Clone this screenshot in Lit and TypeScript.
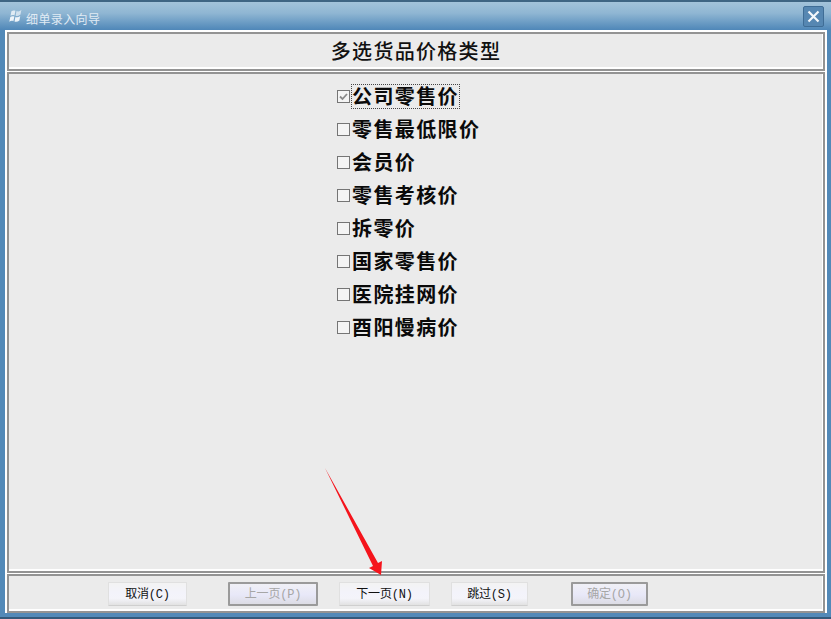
import { LitElement, css, html } from 'lit';
import { customElement } from 'lit/decorators.js';

const PRICE_TYPES = ['公司零售价', '零售最低限价', '会员价', '零售考核价', '拆零价', '国家零售价', '医院挂网价', '酉阳慢病价'];

@customElement('app-root')
export class AppRoot extends LitElement {
  static override styles = css`
    :host {
      display: block;
      position: relative;
      width: 831px;
      height: 619px;
      overflow: hidden;
      font-family: "Liberation Serif", "Noto Sans CJK SC", serif;
    }
    .window {
      display: flex;
      flex-direction: column;
      height: 100%;
      box-sizing: border-box;
      padding-bottom: 2px;
      background: #5289b8;
      border-bottom: 2px solid #34597a;
    }
    .titlebar {
      display: flex;
      align-items: center;
      flex: none;
      height: 30px;
      box-sizing: border-box;
      padding: 1px 7px 0 8px;
      background: linear-gradient(#a3c3da, #8fb6d3 40%, #4f87b8);
      border-top: 2px solid #3f6583;
    }
    .flag { flex: none; margin-right: 3px; }
    .caption {
      flex: 1;
      padding-top: 4px;
      color: #e0ebf4;
      font: 12px "Noto Sans CJK SC", sans-serif;
      letter-spacing: 0.4px;
    }
    .close {
      display: flex;
      align-items: center;
      justify-content: center;
      width: 21px;
      height: 21px;
      box-sizing: border-box;
      background: #5687b2;
      border: 1px solid #3f6d96;
      border-radius: 2px;
    }
    .client {
      display: flex;
      flex-direction: column;
      gap: 1px;
      flex: 1;
      min-height: 0;
      margin: 0 4px 2px 5px;
      padding: 2px 2px 0;
      background: #fff;
    }
    .panel {
      box-sizing: border-box;
      background: #ebebeb;
      border: 2px solid #939393;
      box-shadow: inset -1px -2px 0 #fff;
    }
    .heading {
      flex: none;
      height: 39px;
      padding-bottom: 3px;
      display: flex;
      align-items: center;
      justify-content: center;
      font: 500 20px "Noto Sans CJK SC", sans-serif;
      letter-spacing: 1.3px;
      color: #111;
    }
    .main {
      flex: 1;
      min-height: 0;
      padding-top: 6px;
    }
    .list {
      width: 158px;
      margin: 0 auto;
    }
    .row {
      display: flex;
      align-items: center;
      height: 33px;
      font: 700 20px "Noto Sans CJK SC", sans-serif;
      letter-spacing: 1.4px;
      color: #0a0a0a;
    }
    .box {
      flex: none;
      display: flex;
      width: 13px;
      height: 13px;
      box-sizing: border-box;
      margin-right: 1px;
      background: #f4f4f4;
      border: 1px solid #757575;
    }
    .label {
      padding: 0 0 1px;
      border: 1px solid transparent;
      line-height: 22px;
    }
    .label.focus { border: 1px dotted #444; }
    .footer {
      flex: none;
      height: 39px;
      display: flex;
      align-items: flex-start;
      gap: 21px;
      padding: 6px 0 0 99px;
    }
    button {
      flex: none;
      height: 24px;
      width: 79px;
      padding: 0 0 2px;
      box-sizing: border-box;
      font: 12px "Liberation Mono", "Noto Sans CJK SC", monospace;
      letter-spacing: -0.2px;
      color: #111;
      background: linear-gradient(#f3f3f3, #f3f3fb 45%, #f4f4fa 70%, #e2e2e2);
      border: 1px solid #e0e0e0;
      border-bottom-color: #cfcfcf;
      border-radius: 1px;
    }
    button[disabled] {
      color: #a6a6a6;
      background: linear-gradient(#f0f0f6, #e8e8f8 55%, #dcdce4);
      border: 2px solid #9a9a9a;
    }
    .prev { width: 90px; margin-left: 20px; }
    .next { width: 91px; }
    .skip { width: 77px; }
    .ok { width: 77px; margin-left: 22px; }
    .arrow {
      position: absolute;
      left: 0;
      top: 0;
      pointer-events: none;
    }
  `;

  override render() {
    return html`
      <div class="window">
        <div class="titlebar">
          <svg class="flag" width="15" height="15" viewBox="0 0 15 15">
            <g fill="#eef4f9">
              <path d="M3.4 2.2C4.8 1.2 6 1.2 7.4 1.8L6.5 6.4C5.2 5.8 3.9 5.8 2.5 6.8z" opacity=".85" />
              <path d="M8.5 2.1C10.2 2.9 11.6 2.6 13.4.8L12.5 5.6C11 7 9.4 7.3 7.6 6.7z" opacity=".7" />
              <path d="M2.3 8C3.6 7 5 6.9 6.3 7.6L5.4 12.2C4 11.5 2.8 11.6 1.3 12.8z" />
              <path d="M7.4 7.9C9 8.5 10.7 8.2 12.2 6.9L11.4 11.4C9.9 12.8 8.2 13.2 6.5 12.6z" />
            </g>
          </svg>
          <span class="caption">细单录入向导</span>
          <div class="close">
            <svg width="13" height="13" viewBox="0 0 13 13">
              <path d="M1.5 1.5 11.5 11.5M11.5 1.5 1.5 11.5" stroke="#f4f8fb" stroke-width="2.2" fill="none" />
            </svg>
          </div>
        </div>
        <div class="client">
          <div class="panel heading">多选货品价格类型</div>
          <div class="panel main">
            <div class="list">
              ${PRICE_TYPES.map(
                (name, i) => html`
                  <div class="row">
                    <span class="box">
                      ${i === 0
                        ? html`<svg width="11" height="11" viewBox="0 0 11 11">
                            <path d="M2 5.5 4.5 8 9 3" stroke="#8a8a8a" stroke-width="1.8" fill="none" />
                          </svg>`
                        : ''}
                    </span>
                    <span class="label ${i === 0 ? 'focus' : ''}">${name}</span>
                  </div>
                `
              )}
            </div>
          </div>
          <div class="panel footer">
            <button>取消(C)</button>
            <button class="prev" disabled>上一页(P)</button>
            <button class="next">下一页(N)</button>
            <button class="skip">跳过(S)</button>
            <button class="ok" disabled>确定(O)</button>
          </div>
        </div>
      </div>
      <svg class="arrow" width="831" height="619" viewBox="0 0 831 619">
        <path d="M325 468 378 563 382 561 381 575 369 568 373 566z" fill="#f5141c" />
      </svg>
    `;
  }
}
